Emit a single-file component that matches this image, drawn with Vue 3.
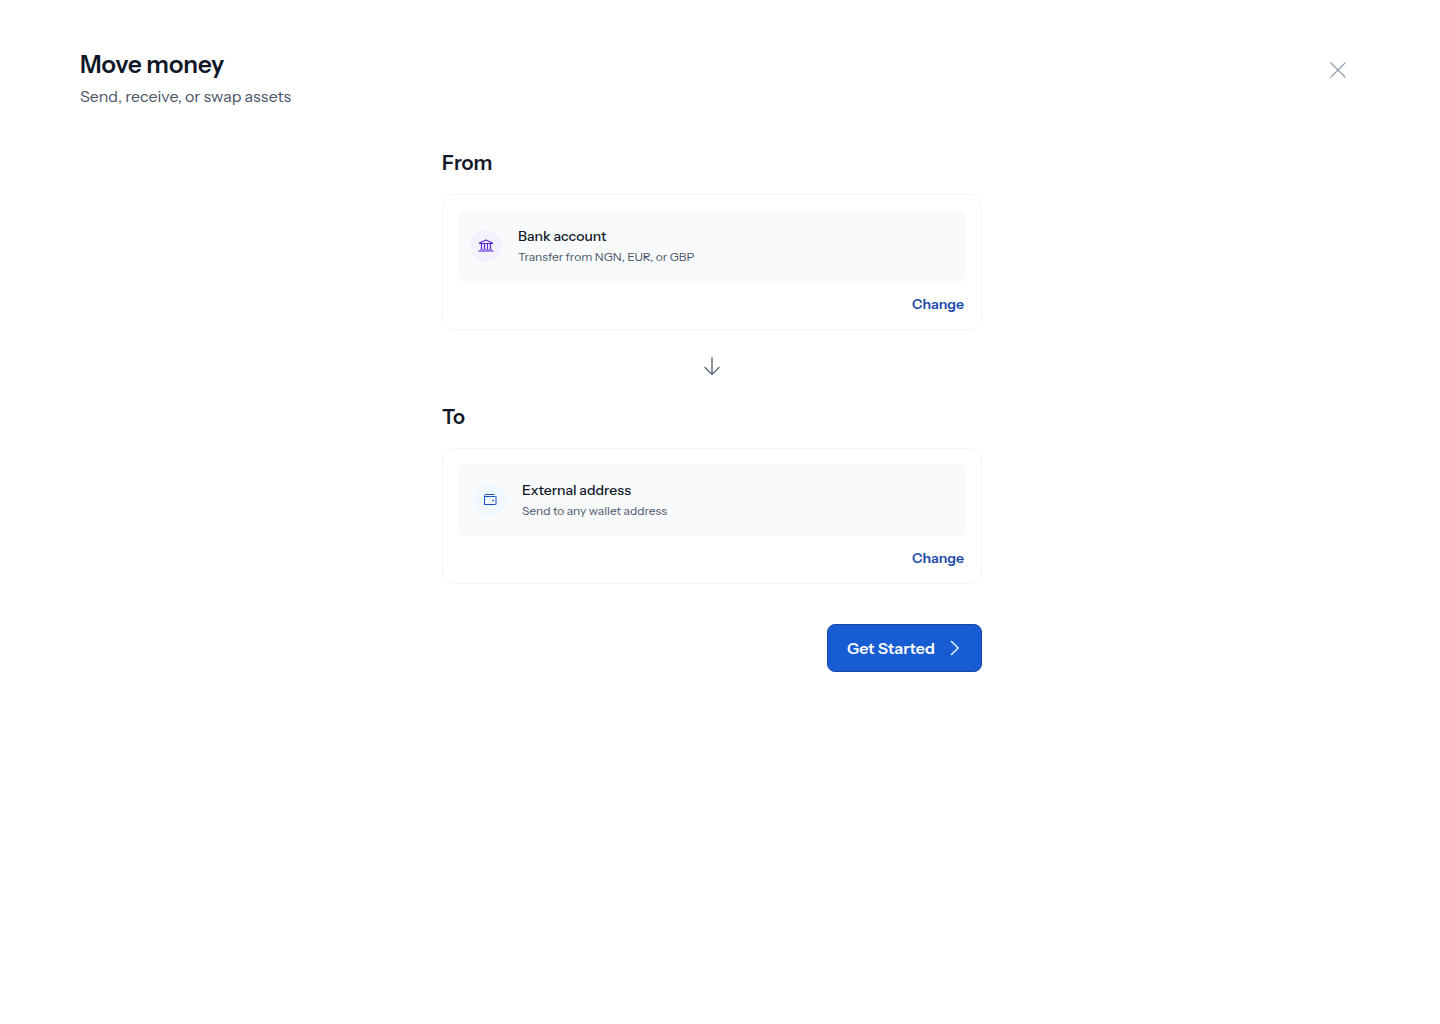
<script setup>
const steps = [
  {
    id: 'from',
    label: 'From',
    title: 'Bank account',
    detail: 'Transfer from NGN, EUR, or GBP',
    icon: 'bank',
  },
  {
    id: 'to',
    label: 'To',
    title: 'External address',
    detail: 'Send to any wallet address',
    icon: 'wallet',
  },
]
</script>

<template>
  <main class="page">
    <header class="header">
      <div>
        <h1 class="title">Move money</h1>
        <p class="subtitle">Send, receive, or swap assets</p>
      </div>
      <button class="close" type="button" aria-label="Close">
        <svg width="24" height="24" viewBox="0 0 24 24" fill="none" stroke="currentColor" stroke-width="1.4" stroke-linecap="round">
          <path d="M5 5 19 19M19 5 5 19" />
        </svg>
      </button>
    </header>

    <div class="flow">
      <template v-for="(step, index) in steps" :key="step.id">
        <svg v-if="index > 0" class="arrow" width="24" height="24" viewBox="0 0 24 24" fill="none" stroke="currentColor" stroke-width="1.5" stroke-linecap="round" stroke-linejoin="round" aria-hidden="true">
          <path d="M12 3.5v17M5 13.5l7 7 7-7" />
        </svg>
        <section class="step" :aria-labelledby="step.id">
          <h2 :id="step.id" class="label">{{ step.label }}</h2>
          <div class="card">
            <div class="option" :class="step.icon">
              <span class="badge">
                <svg v-if="step.icon === 'bank'" width="16" height="16" viewBox="0 0 16 16" fill="none" stroke="currentColor" aria-hidden="true">
                  <path d="M1.500 5 8 1.900 14.500 5v.5h-13z" stroke-width="1.100" stroke-linejoin="round" />
                  <path d="M3.500 5.500V11M6.500 5.500V11M9.500 5.500V11M12.500 5.500V11" stroke-width="1.200" />
                  <path d="M2 11.500h12" opacity=".6" />
                  <path d="M.5 13h15" stroke-width="2" opacity=".55" />
                </svg>
                <svg v-else width="16" height="16" viewBox="0 0 16 16" fill="none" stroke="currentColor" aria-hidden="true">
                  <path d="M12.500 2.500H3.500a1 1 0 0 0-1 1v9h11" />
                  <path d="M3 4.500h10.500" />
                  <path d="M14 4.500v8" stroke-width="2" opacity=".5" />
                  <path d="M10.500 8.500h1.500" stroke-width="1.400" />
                </svg>
              </span>
              <div>
                <h3 class="name">{{ step.title }}</h3>
                <p class="detail">{{ step.detail }}</p>
              </div>
            </div>
            <button class="change" type="button">Change</button>
          </div>
        </section>
      </template>

      <button class="start" type="button">
        Get Started
        <svg width="20" height="20" viewBox="0 0 20 20" fill="none" stroke="currentColor" stroke-width="1.3" stroke-linecap="round" stroke-linejoin="round" aria-hidden="true">
          <path d="m6.500 3.500 6.700 6.500-6.700 6.500" />
        </svg>
      </button>
    </div>
  </main>
</template>

<style>
body {
  margin: 0;
  background: #fff;
}
</style>

<style scoped>
.page {
  box-sizing: border-box;
  min-height: 100vh;
  padding: 48px 96px 48px 80px;
  color: #101828;
  font-family: "Instrument Sans", Inter, "Liberation Sans", sans-serif;
}

h1,
h2,
h3,
p {
  margin: 0;
}

button {
  padding: 0;
  border: 0;
  background: none;
  font-family: inherit;
  cursor: pointer;
}

svg {
  display: block;
  flex: none;
}

.header {
  display: flex;
  align-items: flex-start;
  justify-content: space-between;
}

.title {
  font-size: 24px;
  font-weight: 600;
  line-height: 34px;
}

.subtitle {
  margin-top: 2px;
  color: #475467;
  font-size: 16px;
  line-height: 24px;
}

.close {
  margin: 4px -12px 0 0;
  padding: 6px;
  color: #98a2b3;
}

.flow {
  display: flex;
  flex-direction: column;
  max-width: 540px;
  margin: 40px auto 0;
}

.label {
  font-size: 20px;
  font-weight: 600;
  line-height: 30px;
}

.card {
  display: flex;
  flex-direction: column;
  align-items: flex-end;
  gap: 12px;
  margin-top: 16px;
  padding: 15px;
  border: 1px solid #f2f4f7;
  border-radius: 12px;
}

.option {
  box-sizing: border-box;
  display: flex;
  align-items: center;
  align-self: stretch;
  gap: 16px;
  min-height: 72px;
  padding: 12px;
  border-radius: 8px;
  background: #f9fafc;
}

.wallet {
  padding: 12px 16px;
}

.badge {
  display: grid;
  flex: none;
  place-items: center;
  width: 32px;
  height: 32px;
  border-radius: 50%;
}

.bank .badge {
  background: #f4f1ff;
  color: #5b28d9;
}

.wallet .badge {
  background: #eff7ff;
  color: #164dc0;
}

.name {
  font-size: 14px;
  font-weight: 500;
  line-height: 20px;
}

.detail {
  margin-top: 2px;
  color: #475467;
  font-size: 12px;
  line-height: 18px;
}

.change {
  margin-right: 2px;
  color: #1849a9;
  font-size: 14px;
  font-weight: 600;
  line-height: 20px;
}

.arrow {
  align-self: center;
  margin: 24px 0;
  color: #667085;
}

.start {
  box-sizing: border-box;
  display: flex;
  align-items: center;
  align-self: flex-end;
  gap: 10px;
  height: 48px;
  margin-top: 40px;
  padding: 0 16px 0 19px;
  border: 1px solid #1849a9;
  border-radius: 8px;
  background: #175cd3;
  color: #fff;
  font-size: 16px;
  font-weight: 600;
  line-height: 24px;
}
</style>
